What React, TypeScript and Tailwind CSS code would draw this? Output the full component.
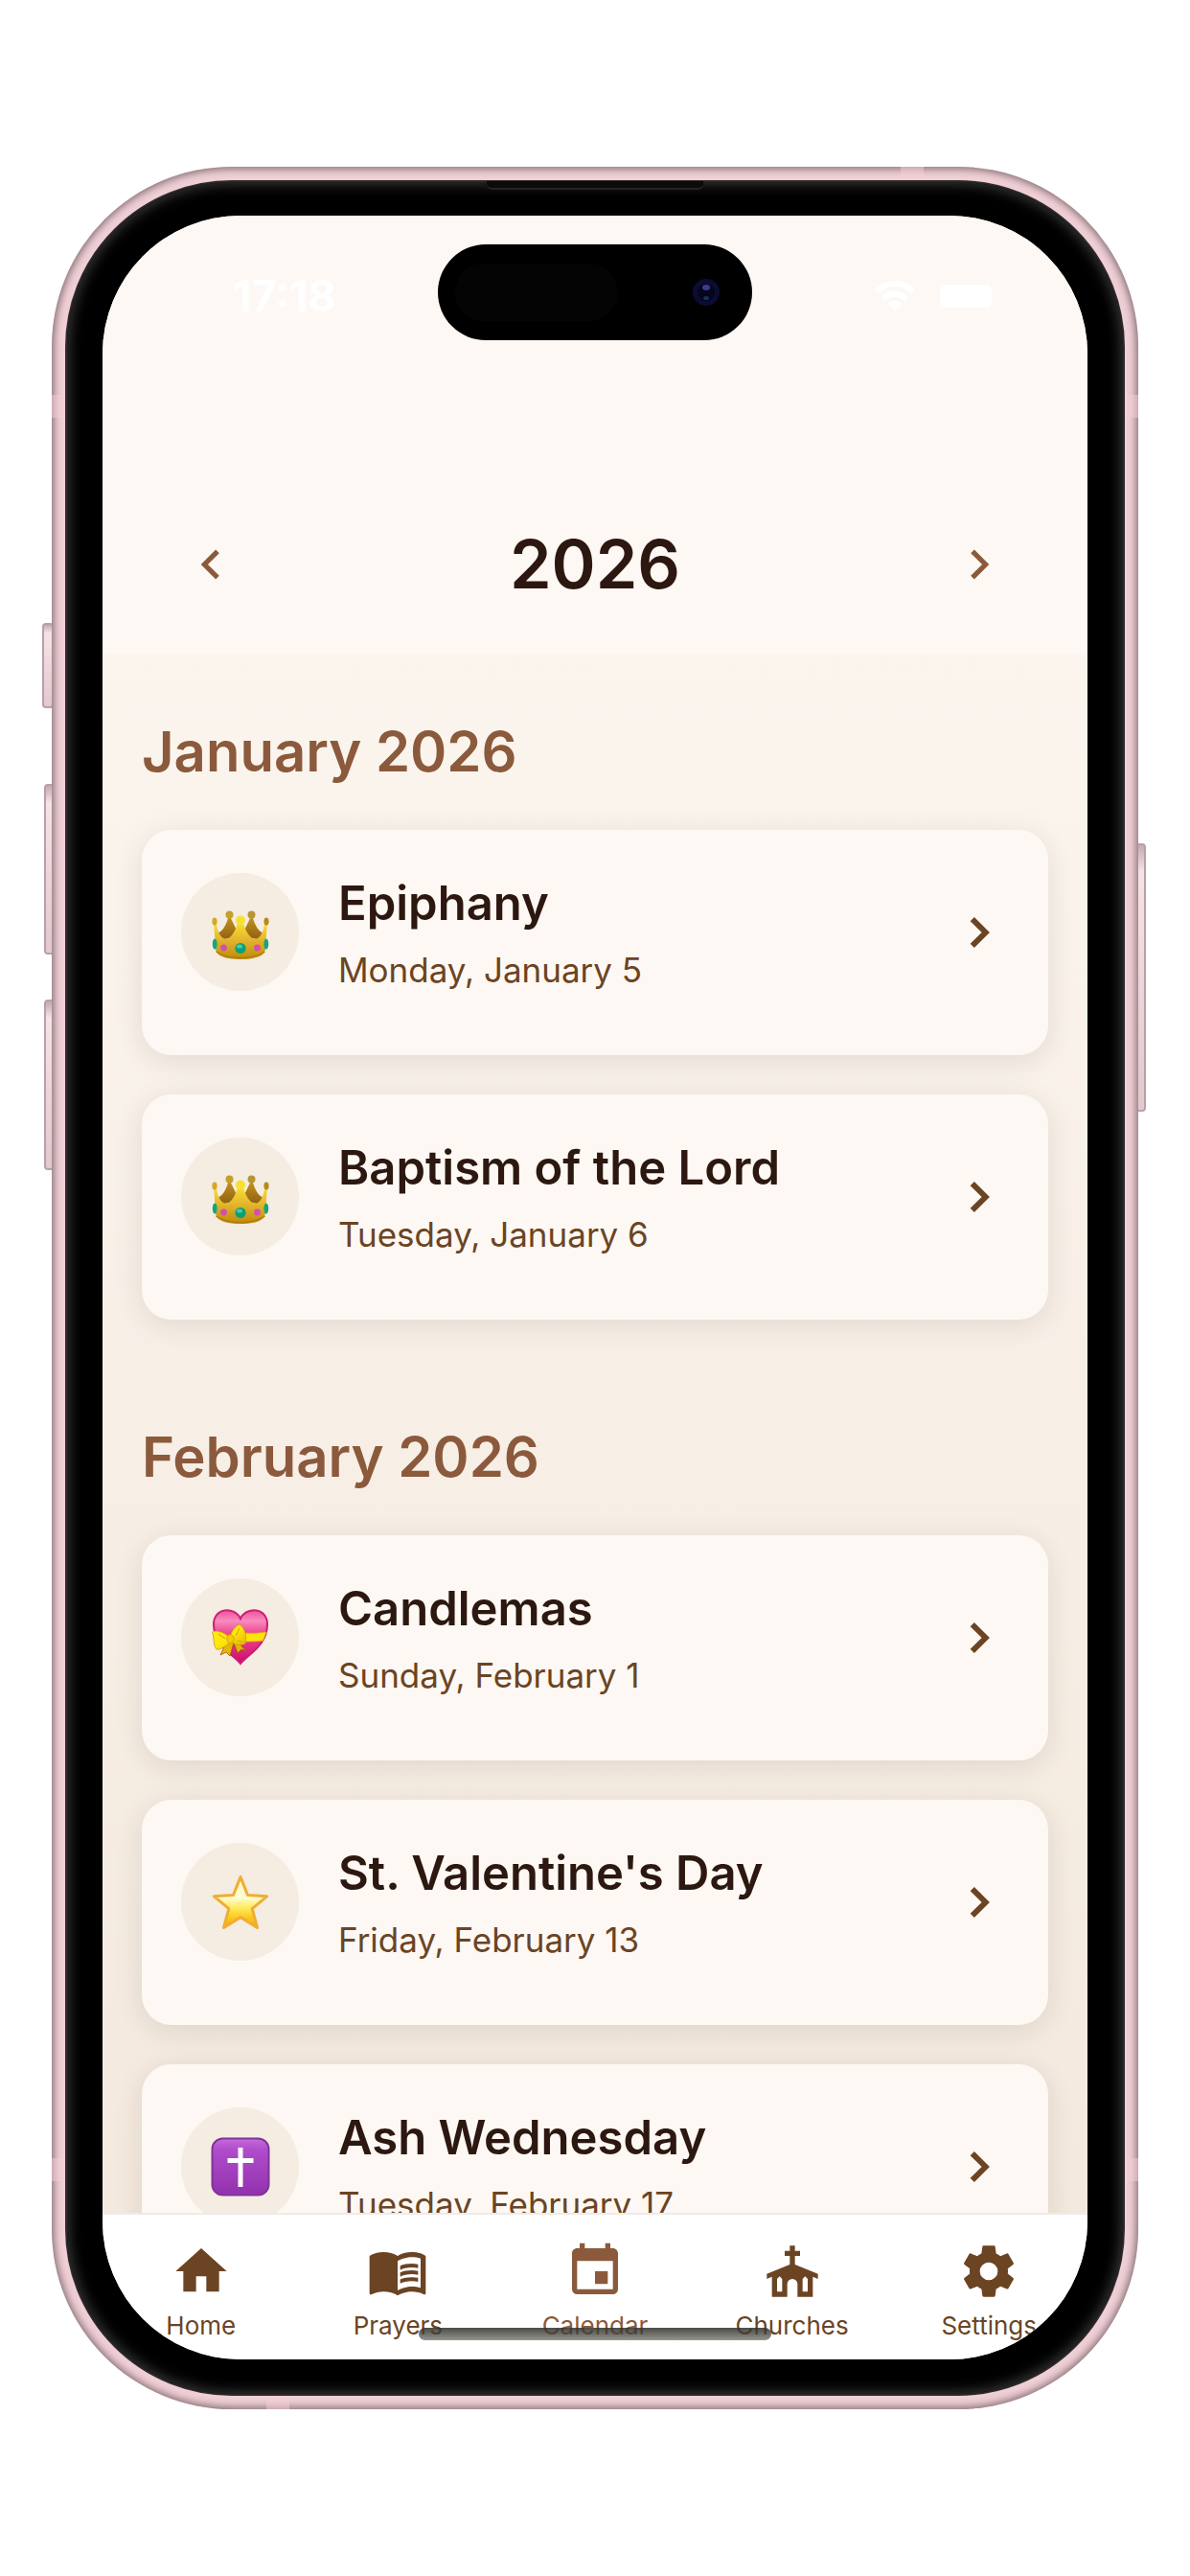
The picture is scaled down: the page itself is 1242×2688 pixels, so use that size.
import React from 'react';
import { MdChevronLeft, MdChevronRight, MdMenuBook } from 'react-icons/md';

type IconProps = { className?: string };

function HomeIcon({ className }: IconProps) {
  return (
    <svg viewBox="0 0 24 24" fill="currentColor" className={className} aria-hidden="true">
      <path d="M10,20V14H14V20H19V12H22L12,3L2,12H5V20H10Z" />
    </svg>
  );
}

function CalendarIcon({ className }: IconProps) {
  return (
    <svg viewBox="0 0 24 24" fill="currentColor" className={className} aria-hidden="true">
      <path d="M19,19H5V8H19M16,1V3H8V1H6V3H5C3.89,3 3,3.89 3,5V19A2,2 0 0,0 5,21H19A2,2 0 0,0 21,19V5C21,3.89 20.1,3 19,3H18V1M17,12H12V17H17V12Z" />
    </svg>
  );
}

function ChurchIcon({ className }: IconProps) {
  return (
    <svg viewBox="0 0 24 24" fill="currentColor" className={className} aria-hidden="true">
      <path d="M11,2H13V4H15V6H13V9.4L22,13V15L20,14.2V22H14V17A2,2 0 0,0 12,15A2,2 0 0,0 10,17V22H4V14.2L2,15V13L11,9.4V6H9V4H11V2M6,20H8V15L7,14L6,15V20M16,20H18V15L17,14L16,15V20Z" />
    </svg>
  );
}

function CogIcon({ className }: IconProps) {
  return (
    <svg viewBox="0 0 24 24" fill="currentColor" className={className} aria-hidden="true">
      <path d="M12,15.5A3.5,3.5 0 0,1 8.5,12A3.5,3.5 0 0,1 12,8.5A3.5,3.5 0 0,1 15.5,12A3.5,3.5 0 0,1 12,15.5M19.43,12.97C19.47,12.65 19.5,12.33 19.5,12C19.5,11.67 19.47,11.34 19.43,11L21.54,9.37C21.73,9.22 21.78,8.95 21.66,8.73L19.66,5.27C19.54,5.05 19.27,4.96 19.05,5.05L16.56,6.05C16.04,5.66 15.5,5.32 14.87,5.07L14.5,2.42C14.46,2.18 14.25,2 14,2H10C9.75,2 9.54,2.18 9.5,2.42L9.13,5.07C8.5,5.32 7.96,5.66 7.44,6.05L4.95,5.05C4.73,4.96 4.46,5.05 4.34,5.27L2.34,8.73C2.21,8.95 2.27,9.22 2.46,9.37L4.57,11C4.53,11.34 4.5,11.67 4.5,12C4.5,12.33 4.53,12.65 4.57,12.97L2.46,14.63C2.27,14.78 2.21,15.05 2.34,15.27L4.34,18.73C4.46,18.95 4.73,19.03 4.95,18.95L7.44,17.94C7.96,18.34 8.5,18.68 9.13,18.93L9.5,21.58C9.54,21.82 9.75,22 10,22H14C14.25,22 14.46,21.82 14.5,21.58L14.87,18.93C15.5,18.67 16.04,18.34 16.56,17.94L19.05,18.95C19.27,19.03 19.54,18.95 19.66,18.73L21.66,15.27C21.78,15.05 21.73,14.78 21.54,14.63L19.43,12.97Z" />
    </svg>
  );
}

function CardChevron() {
  return (
    <svg viewBox="0 0 24 24" fill="none" stroke="currentColor" strokeWidth="2.3" className="size-[62px] shrink-0 text-[#6b4423]" aria-hidden="true">
      <path d="M9.200 6.600 L14.600 12 L9.200 17.400" />
    </svg>
  );
}

function CrownIcon() {
  return (
    <svg viewBox="0 0 60 60" className="size-[60px]" aria-hidden="true">
      <defs>
        <linearGradient id="crownFront" x1="0" y1="0" x2="0" y2="1">
          <stop offset="0" stopColor="#fbe32e" />
          <stop offset="0.45" stopColor="#e6b930" />
          <stop offset="1" stopColor="#bd8a0c" />
        </linearGradient>
        <linearGradient id="crownBack" x1="0" y1="0" x2="0" y2="1">
          <stop offset="0" stopColor="#c79a22" />
          <stop offset="1" stopColor="#8f5f10" />
        </linearGradient>
      </defs>
      <path d="M18 11 L29 34 L7 38 L5 31 Q14 29 18 11Z" fill="url(#crownBack)" />
      <path d="M42 11 L31 34 L53 38 L55 31 Q46 29 42 11Z" fill="url(#crownBack)" />
      <path d="M2 18 L4 47 Q5 58 30 58 Q55 58 56 47 L58 18 L55.500 18 Q54 34 46 37 Q37 36 32.500 18 L27.500 18 Q23 36 14 37 Q6 34 4.500 18Z" fill="url(#crownFront)" />
      <circle cx="18.500" cy="11.500" r="4" fill="#c3a02c" />
      <circle cx="41.500" cy="11.500" r="4" fill="#b89433" />
      <circle cx="30" cy="17.500" r="5" fill="#f8e030" />
      <ellipse cx="3" cy="18.500" rx="2.600" ry="4" fill="#d6a91f" />
      <ellipse cx="57" cy="18.500" rx="2.600" ry="4" fill="#b98a17" />
      <path d="M4.500 50 Q14 56.500 30 56.500 Q46 56.500 55.500 50" fill="none" stroke="#b07c0a" strokeWidth="1.500" />
      <ellipse cx="3.200" cy="42" rx="2.400" ry="5.500" fill="#12a67c" />
      <ellipse cx="56.800" cy="42" rx="2.400" ry="5.500" fill="#12a67c" />
      <circle cx="30" cy="46.500" r="5.600" fill="#0b9f78" />
      <ellipse cx="29" cy="44.500" rx="3" ry="2" fill="#43cfa6" />
      <circle cx="12.500" cy="46" r="3.400" fill="#d34fae" />
      <circle cx="47.500" cy="46" r="3.400" fill="#d34fae" />
    </svg>
  );
}

function HeartIcon() {
  return (
    <svg viewBox="0 0 60 60" className="size-[60px]" aria-hidden="true">
      <defs>
        <linearGradient id="heartFill" x1="0" y1="0" x2="0" y2="1">
          <stop offset="0" stopColor="#f0509c" />
          <stop offset="0.2" stopColor="#f78bbd" />
          <stop offset="0.42" stopColor="#ee4a94" />
          <stop offset="1" stopColor="#cf0a6b" />
        </linearGradient>
        <linearGradient id="bowFill" x1="0" y1="0" x2="1" y2="1">
          <stop offset="0" stopColor="#ffe81c" />
          <stop offset="0.5" stopColor="#fde80b" />
          <stop offset="1" stopColor="#dca804" />
        </linearGradient>
      </defs>
      <path d="M30 57 C23 48 2 38 2 16 C2 -2 24 -3 30 10 C36 -3 58 -2 58 16 C58 38 37 48 30 57Z" fill="url(#heartFill)" stroke="#c81f73" strokeWidth="2" />
      <path d="M33 25 Q46 26 57 24 L53.500 33 Q46 34 35 34Z" fill="#fde30d" stroke="#e4ad08" strokeWidth="0.800" />
      <path d="M16 33 L9 48 L15 45 L19 49 L23 35 L27 46 L31 42 L36 44 L25 32Z" fill="#e6b50a" stroke="#9a5b06" strokeWidth="0.800" />
      <path d="M19 30 C12 23 3 22 .500 24 C3 31 1 37 5 42 C10 43 15 38 20 34 C25 38 31 38 35 36 C37 30 35 20 29 16 C24 18 20 24 19 30Z" fill="url(#bowFill)" stroke="#d49c0b" strokeWidth="0.800" />
      <path d="M16 28 Q20 25 23 29 Q24 34 20 36 Q15 35 16 28Z" fill="#f5ca08" stroke="#cc950a" strokeWidth="0.800" />
      <path d="M29 20 L25 28 M7 26 L14 31 M26 33 L32 34" stroke="#e2ae08" strokeWidth="1.200" />
    </svg>
  );
}

function StarIcon() {
  return (
    <svg viewBox="0 0 60 60" className="size-[60px]" aria-hidden="true">
      <defs>
        <linearGradient id="starFill" x1="0" y1="0" x2="0" y2="1">
          <stop offset="0" stopColor="#fff6b8" />
          <stop offset="0.4" stopColor="#fffdd6" />
          <stop offset="0.6" stopColor="#ffed60" />
          <stop offset="0.8" stopColor="#fcc81f" />
          <stop offset="1" stopColor="#f3a41c" />
        </linearGradient>
      </defs>
      <path d="M30 3.500 L37.500 22.500 L57.500 23.800 L42.200 36.700 L47.500 56.500 L30 45.700 L12.500 56.500 L17.800 36.700 L2.500 23.800 L22.500 22.500Z" fill="url(#starFill)" stroke="#efae32" strokeWidth="3" strokeLinejoin="round" />
    </svg>
  );
}

function CrossIcon() {
  return (
    <svg viewBox="0 0 62 62" className="size-[62px]" aria-hidden="true">
      <defs>
        <linearGradient id="crossFill" x1="0" y1="0" x2="0" y2="1">
          <stop offset="0" stopColor="#c76bdc" />
          <stop offset="0.2" stopColor="#b04ccb" />
          <stop offset="1" stopColor="#9231ae" />
        </linearGradient>
      </defs>
      <rect x="1.500" y="1.500" width="59" height="59" rx="11" fill="url(#crossFill)" stroke="#7f3598" strokeWidth="2" />
      <path d="M31 11 V52 M17.500 24.500 H44.500" stroke="#fff" strokeWidth="5" fill="none" />
    </svg>
  );
}

type Feast = { name: string; date: string; icon: () => React.JSX.Element };

const months: { title: string; feasts: Feast[] }[] = [
  {
    title: 'January 2026',
    feasts: [
      { name: 'Epiphany', date: 'Monday, January 5', icon: CrownIcon },
      { name: 'Baptism of the Lord', date: 'Tuesday, January 6', icon: CrownIcon },
    ],
  },
  {
    title: 'February 2026',
    feasts: [
      { name: 'Candlemas', date: 'Sunday, February 1', icon: HeartIcon },
      { name: "St. Valentine's Day", date: 'Friday, February 13', icon: StarIcon },
      { name: 'Ash Wednesday', date: 'Tuesday, February 17', icon: CrossIcon },
    ],
  },
];

const tabs = [
  { label: 'Home', icon: HomeIcon },
  { label: 'Prayers', icon: MdMenuBook },
  { label: 'Calendar', icon: CalendarIcon, current: true },
  { label: 'Churches', icon: ChurchIcon },
  { label: 'Settings', icon: CogIcon },
];

function FeastCard({ name, date, icon: Icon }: Feast) {
  return (
    <li>
      <button
        type="button"
        className="block w-full rounded-[31px] bg-[#fdf8f3] px-[41px] pt-[40px] pb-[62px] text-left shadow-[0_6px_30px_rgba(44,24,16,0.11)]"
      >
        <span className="flex h-[133px] items-center gap-[41px]">
          <span className="flex size-[123px] shrink-0 items-center justify-center rounded-full bg-[#f5ece2]">
            <Icon />
          </span>
          <span className="flex min-w-0 flex-1 flex-col gap-[8px]">
            <span className="text-[49px] leading-[72px] font-semibold whitespace-nowrap text-[#2c1810]">{name}</span>
            <span className="text-[35px] leading-[51px] whitespace-nowrap text-[#6b4423]">{date}</span>
          </span>
          <CardChevron />
        </span>
      </button>
    </li>
  );
}

function StatusBar() {
  return (
    <div className="relative flex h-[167px] shrink-0 items-center justify-between pr-[90px] pl-[136px] text-white">
      <span className="text-[45px] leading-[48px] font-bold">17:18</span>
      <div className="flex items-center gap-[22px]">
        <svg viewBox="0 0 42 32" className="h-[32px] w-[42px]" aria-hidden="true">
          <path d="M2 11 Q21 -6 40 11 M9 19 Q21 8 33 19" fill="none" stroke="currentColor" strokeWidth="6" />
          <path d="M14 24 Q21 17 28 24 L21 31Z" fill="currentColor" />
        </svg>
        <svg viewBox="0 0 68 32" className="h-[32px] w-[68px]" aria-hidden="true">
          <rect x="1" y="1" width="60" height="30" rx="9" fill="none" stroke="currentColor" strokeWidth="1" opacity="0.5" />
          <rect x="4" y="4" width="54" height="24" rx="6" fill="currentColor" />
          <path d="M64 11 Q68 16 64 21Z" fill="currentColor" opacity="0.6" />
        </svg>
      </div>
      <div className="absolute top-[30px] left-1/2 flex h-[100px] w-[328px] -translate-x-1/2 items-center justify-end rounded-full bg-black pr-[34px]">
        <div className="mr-auto ml-[18px] h-[60px] w-[170px] rounded-full bg-[#040404]" />
        <svg viewBox="0 0 28 28" className="size-[28px]" aria-hidden="true">
          <circle cx="14" cy="14" r="14" fill="#0c0c33" />
          <circle cx="14" cy="14" r="9" fill="#05051c" />
          <ellipse cx="14" cy="9" rx="4" ry="3" fill="#3c3c8a" />
          <ellipse cx="14" cy="20" rx="3" ry="2" fill="#14345a" />
        </svg>
      </div>
    </div>
  );
}

function Header() {
  return (
    <header className="shrink-0 bg-[#fdf8f3]">
      <StatusBar />
      <div className="flex items-center justify-between px-[82px] pt-[152px] pb-[48px]">
        <button type="button" aria-label="Previous year" className="flex size-[62px] items-center justify-center text-[#8b5a3c]">
          <MdChevronLeft className="size-[62px]" />
        </button>
        <h1 className="text-[70px] leading-[90px] font-semibold text-[#2c1810]">2026</h1>
        <button type="button" aria-label="Next year" className="flex size-[62px] items-center justify-center text-[#8b5a3c]">
          <MdChevronRight className="size-[62px]" />
        </button>
      </div>
    </header>
  );
}

function TabBar() {
  return (
    <nav className="relative shrink-0 border-t-2 border-[#eeeae8] bg-white pt-[27px] pb-[18px]">
      <ul className="grid grid-cols-5">
        {tabs.map(({ label, icon: Icon, current }) => (
          <li key={label}>
            <a
              href={`#${label.toLowerCase()}`}
              aria-current={current ? 'page' : undefined}
              className={`flex flex-col items-center gap-[8px] ${current ? 'text-[#8b5a3c]' : 'text-[#6b4423]'}`}
            >
              <Icon className="size-[64px]" />
              <span className="text-[26px] leading-[34px]">{label}</span>
            </a>
          </li>
        ))}
      </ul>
      <div className="absolute bottom-[20px] left-1/2 h-[13px] w-[368px] -translate-x-1/2 rounded-full bg-linear-to-b from-[#33332de0] to-[#55554fa0]" />
    </nav>
  );
}

function SideButton({ className }: { className: string }) {
  return (
    <div
      className={`absolute w-[12px] rounded-[4px] border-2 border-[#b9a0a7] bg-linear-to-b from-[#c5abb2] via-[#f6e3e6] via-10% to-[#e3c8ce] ${className}`}
    />
  );
}

function AntennaBand({ className }: { className: string }) {
  return <div className={`absolute bg-[#f6cdd6] opacity-50 ${className}`} />;
}

export default function App() {
  return (
    <main className="flex h-screen bg-white px-[54px] py-[174px] font-['Inter',sans-serif]">
      <div className="relative flex min-w-0 flex-1">
        <SideButton className="top-[476px] -left-[10px] h-[89px]" />
        <SideButton className="top-[644px] -left-[8px] h-[178px]" />
        <SideButton className="top-[869px] -left-[8px] h-[178px]" />
        <SideButton className="top-[706px] -right-[8px] h-[280px]" />
        <div className="relative flex min-w-0 flex-1 rounded-[188px] bg-[#f0d0d6] p-[14px] shadow-[inset_0_0_8px_2px_#7d686e]">
          <AntennaBand className="top-[238px] left-0 h-[24px] w-[14px]" />
          <AntennaBand className="top-[238px] right-0 h-[24px] w-[14px]" />
          <AntennaBand className="bottom-[238px] left-0 h-[24px] w-[14px]" />
          <AntennaBand className="right-0 bottom-[238px] h-[24px] w-[14px]" />
          <AntennaBand className="top-0 right-[224px] h-[14px] w-[24px]" />
          <AntennaBand className="bottom-0 left-[224px] h-[14px] w-[24px]" />
          <div className="relative flex min-w-0 flex-1 rounded-[174px] border-2 border-[#2e2a2b] bg-black px-[37px] pt-[35px] pb-[36px] shadow-[inset_0_0_14px_2px_#3a3a3a]">
            <div className="absolute -top-px left-1/2 h-[9px] w-[226px] -translate-x-1/2 rounded-b-[6px] border-b-2 border-[#242424] bg-[#0b0b0b]" />
            <div className="flex min-w-0 flex-1 flex-col overflow-hidden rounded-[144px] bg-linear-to-b from-[#fdf8f3] to-[#f3e8dc]">
              <Header />
              <div className="flex min-h-0 flex-1 flex-col gap-[107px] overflow-hidden px-[41px] pt-[66px]">
                {months.map((month) => (
                  <section key={month.title} className="shrink-0">
                    <h2 className="mb-[46px] text-[58px] leading-[72px] font-semibold text-[#8b5a3c]">{month.title}</h2>
                    <ul className="flex flex-col gap-[41px]">
                      {month.feasts.map((feast) => (
                        <FeastCard key={feast.name} {...feast} />
                      ))}
                    </ul>
                  </section>
                ))}
              </div>
              <TabBar />
            </div>
          </div>
        </div>
      </div>
    </main>
  );
}
